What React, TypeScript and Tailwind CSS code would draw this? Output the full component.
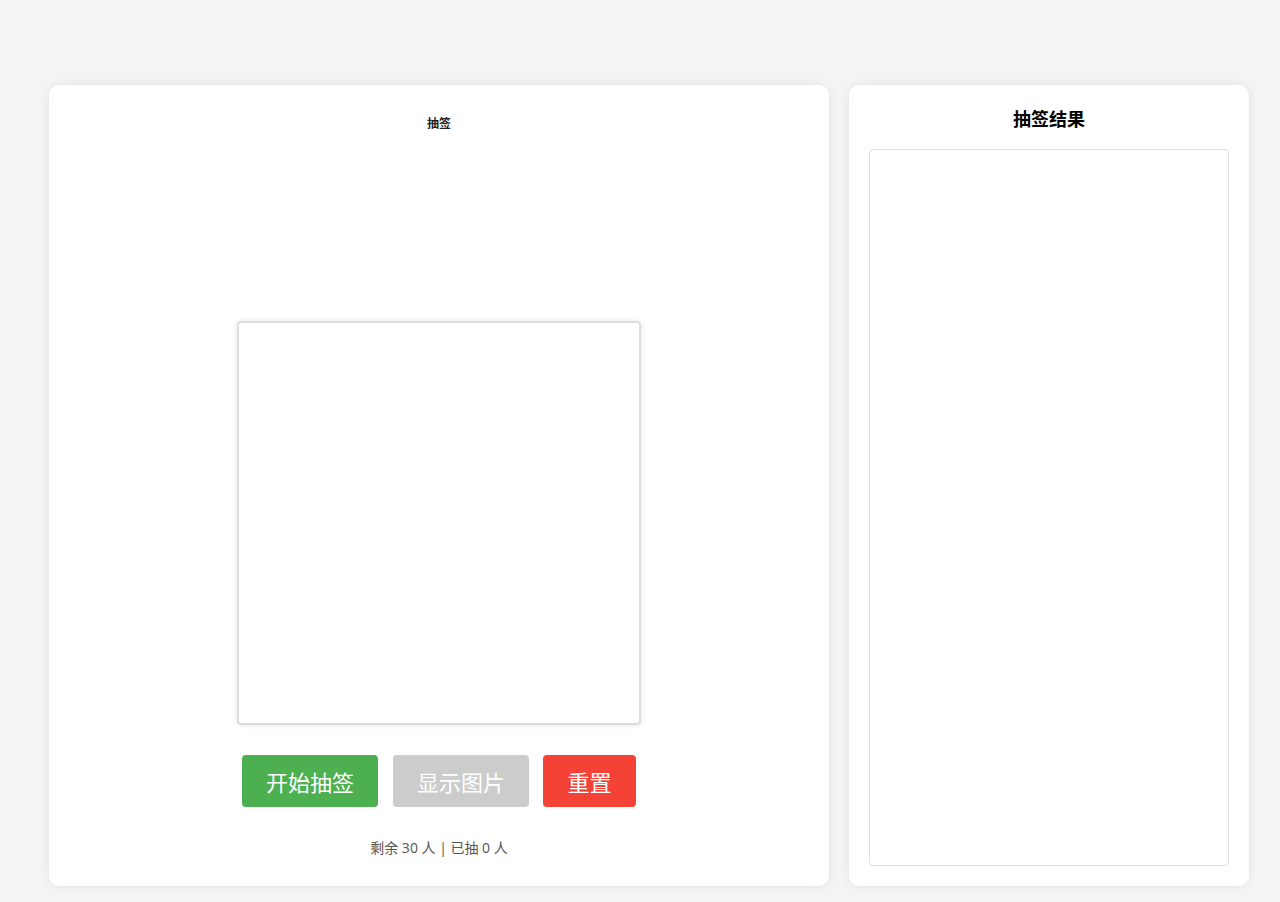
export default function App() {
  return (
    <div
      className="min-h-[902px] bg-[#f4f4f4] pl-[49px] pt-[85px]"
      style={{ fontFamily: '"Noto Sans CJK SC", "Noto Sans", sans-serif' }}
    >
      <div className="flex gap-5">
        {/* Draw panel */}
        <div className="flex h-[801px] w-[780px] flex-col items-center rounded-[10px] bg-white px-5 pt-[29px] shadow-[0_0_10px_rgba(0,0,0,0.08)]">
          <h1 className="text-[12px] font-bold leading-[18px] text-[#222]">抽签</h1>

          <div className="mt-[189px] h-[404px] w-[404px] rounded-[4px] border-2 border-[#dddddd] bg-white shadow-[0_0_6px_rgba(0,0,0,0.1)]" />

          <div className="mt-[30px] flex">
            <button className="h-[52px] w-[136px] rounded-[4px] bg-[#4caf50] text-[22px] leading-[28px] text-white">
              开始抽签
            </button>
            <button className="ml-[15px] h-[52px] w-[136px] rounded-[4px] bg-[#cccccc] text-[22px] leading-[28px] text-white">
              显示图片
            </button>
            <button className="ml-[14px] h-[52px] w-[93px] rounded-[4px] bg-[#f44336] text-[22px] leading-[28px] text-white">
              重置
            </button>
          </div>

          <p
            className="mt-[31px] text-[14px] leading-[20px] text-[#555]"
            style={{ fontFamily: '"Open Sans", "Noto Sans CJK SC", sans-serif' }}
          >
            剩余 30 人 | 已抽 0 人
          </p>
        </div>

        {/* Results panel */}
        <div className="flex h-[801px] w-[400px] flex-col rounded-[10px] bg-white p-5 shadow-[0_0_10px_rgba(0,0,0,0.08)]">
          <h2 className="text-center text-[18px] font-bold leading-[26px] text-black">抽签结果</h2>
          <div className="mt-[18px] flex-1 rounded-[4px] border border-[#dddddd]" />
        </div>
      </div>
    </div>
  )
}
